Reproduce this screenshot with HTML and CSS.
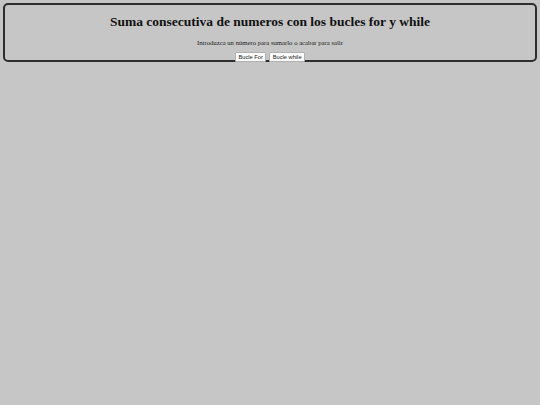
FILE: index.html
```html
<!DOCTYPE html>
<html lang="es">
<head>
<meta charset="utf-8">
<link rel="stylesheet" href="styles.css">
</head>
<body>
<div class="panel">
  <h1 class="title">Suma consecutiva de numeros con los bucles for y while</h1>
  <p class="intro">Introduzca un número para sumarlo o acabar para salir</p>
  <div class="buttons">
    <button class="btn">Bucle For</button>
    <button class="btn">Bucle while</button>
  </div>
</div>
</body>
</html>
```
FILE: styles.css
```css
html, body {
  margin: 0;
  padding: 0;
  background: #c6c6c6;
}
body {
  padding: 3px;
  font-family: "Liberation Serif", "Times New Roman", serif;
  color: #000;
}
.panel {
  border: 2px solid #2e2e2e;
  border-radius: 5px;
  height: 55px;
  text-align: center;
  box-sizing: content-box;
}
.title {
  margin: 0;
  padding-top: 9px;
  font-size: 13.5px;
  line-height: 16px;
  font-weight: bold;
  color: #111;
}
.intro {
  margin: 8px 0 0;
  font-size: 6.7px;
  line-height: 9px;
  color: #222;
}
.buttons {
  margin-top: 5px;
  display: flex;
  justify-content: center;
  gap: 3px;
}
.btn {
  font-family: "Liberation Sans", Arial, sans-serif;
  font-size: 5.7px;
  line-height: 7px;
  height: 10px;
  padding: 0 2.5px;
  margin: 0;
  background: #fbfbfb;
  border: 1px solid #b0b0b0;
  border-radius: 1px;
  color: #222;
}
```
